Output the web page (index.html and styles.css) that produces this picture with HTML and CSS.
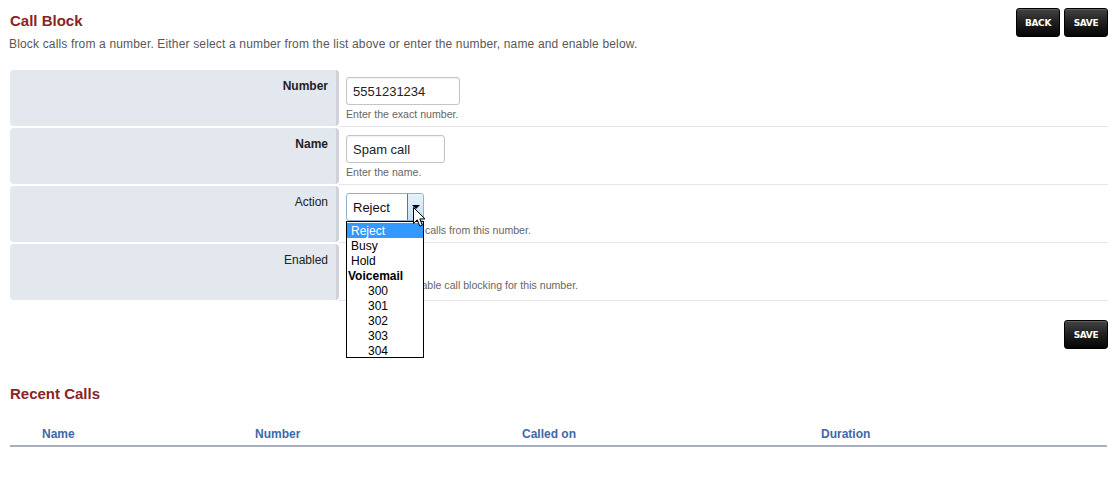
FILE: index.html
```html
<!DOCTYPE html>
<html>
<head>
<meta charset="utf-8">
<link rel="stylesheet" href="styles.css">
</head>
<body>
<div class="page">
  <div class="header">
    <div class="intro">
      <h1 class="title">Call Block</h1>
      <p class="subtitle">Block calls from a number. Either select a number from the list above or enter the number, name and enable below.</p>
    </div>
    <div class="actions">
      <button class="btn">BACK</button>
      <button class="btn">SAVE</button>
    </div>
  </div>

  <div class="form">
    <div class="row">
      <div class="label strong">Number</div>
      <div class="field">
        <div class="input w-number">5551231234</div>
        <div class="help">Enter the exact number.</div>
      </div>
    </div>
    <div class="row">
      <div class="label strong">Name</div>
      <div class="field">
        <div class="input w-name">Spam call</div>
        <div class="help">Enter the name.</div>
      </div>
    </div>
    <div class="row">
      <div class="label">Action</div>
      <div class="field field-select">
        <div class="select">
          <span class="select-value">Reject</span>
          <span class="select-arrow"><span class="tri"></span></span>
        </div>
        <div class="help">Select action for calls from this number.</div>
        <div class="dropdown">
          <div class="opt selected">Reject</div>
          <div class="opt">Busy</div>
          <div class="opt">Hold</div>
          <div class="group">Voicemail</div>
          <div class="opt sub">300</div>
          <div class="opt sub">301</div>
          <div class="opt sub">302</div>
          <div class="opt sub">303</div>
          <div class="opt sub">304</div>
        </div>
        <svg class="cursor" width="13" height="21" viewBox="0 0 13 21">
          <path d="M0.5 0.5 L0.5 16.5 L4.3 12.8 L6.8 19.2 L9.3 18.2 L6.8 11.9 L12 11.9 Z" fill="#fff" stroke="#000" stroke-width="1" stroke-linejoin="miter"/>
        </svg>
      </div>
    </div>
    <div class="row">
      <div class="label">Enabled</div>
      <div class="field">
        <div class="checkbox"></div>
        <div class="help">Select this to enable call blocking for this number.</div>
      </div>
    </div>
  </div>

  <div class="save-row">
    <button class="btn">SAVE</button>
  </div>

  <h2 class="title recent">Recent Calls</h2>
  <div class="table">
    <div class="th">Name</div>
    <div class="th">Number</div>
    <div class="th">Called on</div>
    <div class="th">Duration</div>
  </div>
</div>
</body>
</html>
```

FILE: styles.css
```css
* { box-sizing: border-box; }
html, body { margin: 0; padding: 0; background: #fff; }
body {
  font-family: "Liberation Sans", Arial, sans-serif;
  font-size: 12px;
  color: #333;
}
.page { padding: 8px 8px 0 10px; width: 1116px; }

.header { display: flex; justify-content: space-between; align-items: flex-start; }
.title {
  margin: 4px 0 0;
  font-size: 15px;
  line-height: 18px;
  font-weight: bold;
  color: #8a2424;
}
.subtitle {
  margin: 6px 0 0 -1px;
  font-size: 12px;
  line-height: 16px;
  letter-spacing: 0.16px;
  color: #585858;
}
.actions { display: flex; gap: 4px; }
.btn {
  width: 44px;
  height: 29px;
  padding: 0;
  border: 1px solid #000;
  border-radius: 3px;
  background: linear-gradient(#444 0%, #222 45%, #050505 100%);
  box-shadow: inset 0 1px 0 rgba(255,255,255,0.15);
  color: #fff;
  font-family: "DejaVu Sans", Verdana, sans-serif;
  font-weight: bold;
  font-size: 9px;
  letter-spacing: -0.3px;
}

.form { margin-top: 18px; }
.row { display: flex; height: 58px; }
.label {
  width: 329px;
  height: 56px;
  margin-bottom: 2px;
  background: #e3e7ee;
  border-right: 3px solid #cfd3d9;
  border-radius: 4px;
  text-align: right;
  padding: 9px 8px 0 0;
  font-size: 12px;
  line-height: 14px;
  color: #222;
}
.label.strong { font-weight: bold; }
.field {
  flex: 1;
  position: relative;
  height: 57px;
  border-bottom: 1px solid #e4e6e8;
  padding: 7px 0 0 7px;
}
.input {
  height: 28px;
  border: 1px solid #c4c4c4;
  border-radius: 3px;
  padding: 0 0 0 6px;
  font-size: 13px;
  line-height: 27px;
  color: #222;
  box-shadow: inset 0 1px 2px rgba(0,0,0,0.06);
}
.w-number { width: 114px; }
.w-name { width: 99px; }
.help {
  margin-top: 3px;
  font-size: 10.6px;
  line-height: 13px;
  color: #666;
}

.select {
  display: flex;
  width: 78px;
  height: 28px;
  border: 1px solid #8fb0cf;
  border-radius: 3px;
  background: #fff;
}
.select-value {
  flex: 1;
  padding-left: 6px;
  font-size: 13px;
  line-height: 27px;
  color: #111;
}
.select-arrow {
  width: 16px;
  background: linear-gradient(#e6f2fc, #c4dff5);
  border-left: 1px solid #3c7fb1;
  border-radius: 0 2px 2px 0;
  display: flex;
  align-items: center;
  justify-content: center;
}
.tri {
  width: 0; height: 0;
  border-left: 4px solid transparent;
  border-right: 4px solid transparent;
  border-top: 4px solid #000;
}
.dropdown {
  position: absolute;
  left: 7px;
  top: 35px;
  width: 78px;
  height: 137px;
  background: #fff;
  border: 1px solid #000;
  padding-top: 1px;
  font-size: 12px;
  line-height: 15px;
  color: #000;
  z-index: 5;
}
.opt { padding-left: 4px; padding-top: 1px; height: 15px; line-height: 14px; }
.opt.selected { background: #3399ff; color: #fff; }
.opt.sub { padding-left: 21px; }
.group { font-weight: bold; padding-left: 1px; padding-top: 1px; height: 15px; line-height: 14px; }
.cursor { position: absolute; left: 74px; top: 21px; z-index: 6; }

.checkbox {
  width: 13px; height: 13px;
  margin: 4px 0 0 2px;
  border: 1px solid #999;
  border-radius: 2px;
  margin-bottom: 11px;
}

.save-row { display: flex; justify-content: flex-end; margin-top: 18px; }

.recent { margin-top: 36px; }
.table {
  margin-top: 18px;
  width: 1097px;
  display: grid;
  grid-template-columns: 213px 267px 299px 1fr;
  border-bottom: 2px solid #a9b0bd;
}
.th {
  padding: 6px 0 4px 32px;
  font-size: 12px;
  line-height: 14px;
  font-weight: bold;
  color: #3d68a9;
}
```
